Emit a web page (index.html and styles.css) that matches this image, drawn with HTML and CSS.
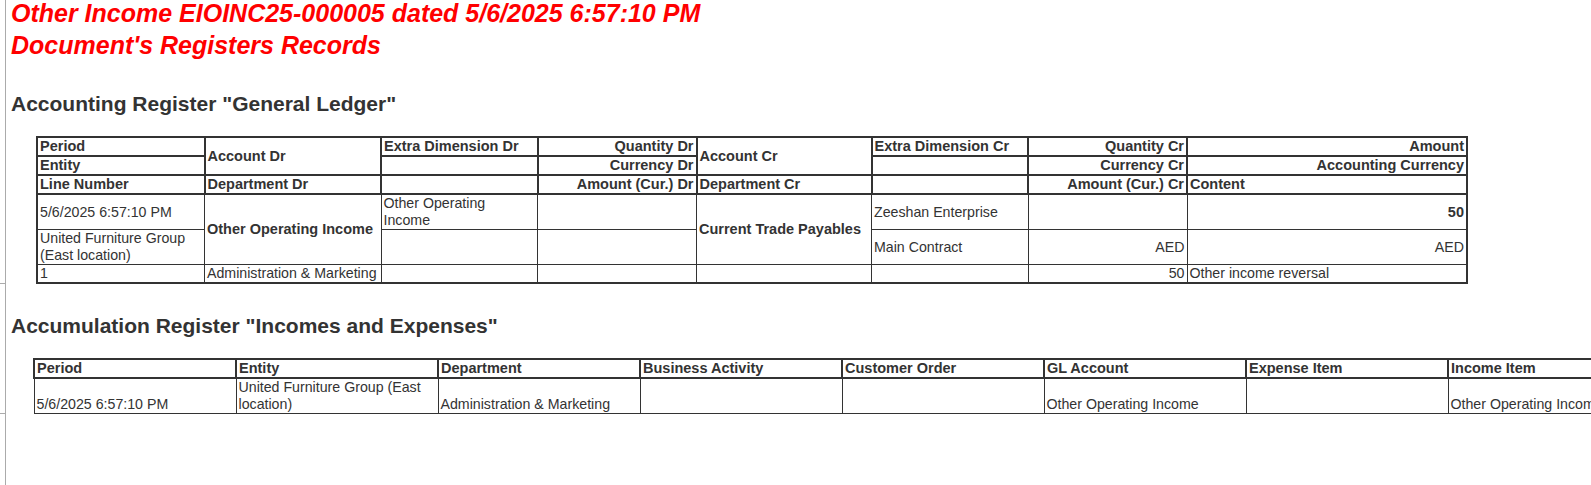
FILE: index.html
```html
<!DOCTYPE html>
<html lang="en">
<head>
<meta charset="utf-8">
<title>Document's Registers Records</title>
<link rel="stylesheet" href="styles.css">
</head>
<body>
<div class="page">
  <div class="titles">
    <div class="title">Other Income EIOINC25-000005 dated 5/6/2025 6:57:10 PM</div>
    <div class="title">Document's Registers Records</div>
  </div>

  <section class="register reg-gl">
    <h2 class="reg-name">Accounting Register "General Ledger"</h2>
    <div class="table-wrap">
      <table class="grid gl">
        <colgroup>
          <col class="g1"><col class="g2"><col class="g3"><col class="g4">
          <col class="g5"><col class="g6"><col class="g7"><col class="g8">
        </colgroup>
        <thead>
          <tr>
            <th>Period</th>
            <th rowspan="2">Account Dr</th>
            <th>Extra Dimension Dr</th>
            <th class="r">Quantity Dr</th>
            <th rowspan="2">Account Cr</th>
            <th>Extra Dimension Cr</th>
            <th class="r">Quantity Cr</th>
            <th class="r">Amount</th>
          </tr>
          <tr>
            <th>Entity</th>
            <th></th>
            <th class="r">Currency Dr</th>
            <th></th>
            <th class="r">Currency Cr</th>
            <th class="r">Accounting Currency</th>
          </tr>
          <tr>
            <th>Line Number</th>
            <th>Department Dr</th>
            <th></th>
            <th class="r">Amount (Cur.) Dr</th>
            <th>Department Cr</th>
            <th></th>
            <th class="r">Amount (Cur.) Cr</th>
            <th>Content</th>
          </tr>
        </thead>
        <tbody>
          <tr>
            <td>5/6/2025 6:57:10 PM</td>
            <td rowspan="2" class="b nw">Other Operating Income</td>
            <td>Other Operating Income</td>
            <td></td>
            <td rowspan="2" class="b nw">Current Trade Payables</td>
            <td>Zeeshan Enterprise</td>
            <td></td>
            <td class="r b">50</td>
          </tr>
          <tr>
            <td>United Furniture Group (East location)</td>
            <td></td>
            <td></td>
            <td>Main Contract</td>
            <td class="r">AED</td>
            <td class="r">AED</td>
          </tr>
          <tr>
            <td>1</td>
            <td class="nw">Administration &amp; Marketing</td>
            <td></td>
            <td></td>
            <td></td>
            <td></td>
            <td class="r">50</td>
            <td>Other income reversal</td>
          </tr>
        </tbody>
      </table>
    </div>
  </section>

  <section class="register reg-ie">
    <h2 class="reg-name">Accumulation Register "Incomes and Expenses"</h2>
    <div class="table-wrap">
      <table class="grid ie">
        <colgroup>
          <col class="a"><col class="a"><col class="a"><col class="a">
          <col class="a"><col class="a"><col class="a"><col class="a">
        </colgroup>
        <thead>
          <tr>
            <th>Period</th>
            <th>Entity</th>
            <th>Department</th>
            <th>Business Activity</th>
            <th>Customer Order</th>
            <th>GL Account</th>
            <th>Expense Item</th>
            <th>Income Item</th>
          </tr>
        </thead>
        <tbody>
          <tr>
            <td>5/6/2025 6:57:10 PM</td>
            <td>United Furniture Group (East location)</td>
            <td>Administration &amp; Marketing</td>
            <td></td>
            <td></td>
            <td>Other Operating Income</td>
            <td></td>
            <td class="nw">Other Operating Income</td>
          </tr>
        </tbody>
      </table>
    </div>
  </section>
</div>
</body>
</html>
```

FILE: styles.css
```css
html {
  overflow: hidden;
  background: #fff;
}

body {
  margin: 0;
  font-family: "Liberation Sans", Arial, sans-serif;
  color: #333;
}

.page {
  margin-left: 5px;
  border-left: 1px solid #ababab;
  min-height: 100vh;
  padding-left: 5px;
  box-sizing: border-box;
}

.titles {
  display: flex;
  flex-direction: column;
  gap: 6px;
}

.title {
  font-size: 25px;
  line-height: 26px;
  font-weight: bold;
  font-style: italic;
  color: #ff0000;
  white-space: nowrap;
}

.reg-name {
  margin: 0;
  font-size: 21px;
  line-height: 24px;
  font-weight: bold;
  color: #333;
  white-space: nowrap;
}

.reg-gl {
  margin-top: 34px;
}

.reg-ie {
  margin-top: 30px;
}

.table-wrap {
  position: relative;
  margin-top: 20px;
}

.table-wrap::after {
  content: "";
  position: absolute;
  left: -11px;
  bottom: 0;
  width: 5px;
  height: 1px;
  background: #ababab;
}

.grid {
  border-collapse: collapse;
  table-layout: fixed;
  font-size: 14.2px;
  line-height: 17px;
  color: #333;
}

.grid th,
.grid td {
  padding: 0 2px;
  text-align: left;
  vertical-align: middle;
  overflow: hidden;
}

.grid th {
  font-size: 14.5px;
  font-weight: bold;
  border: 2px solid #333;
  white-space: nowrap;
}

.grid td {
  font-weight: normal;
  border: 1px solid #333;
}

.grid .r {
  text-align: right;
}

.grid .b {
  font-size: 14.5px;
  font-weight: bold;
}

.grid .nw {
  white-space: nowrap;
}

/* General Ledger table */
.gl {
  width: 1430px;
  margin-left: 25px;
  border: 2px solid #333;
}

.gl .g1 { width: 167.5px; }
.gl .g2 { width: 176.5px; }
.gl .g3 { width: 156.5px; }
.gl .g4 { width: 159px; }
.gl .g5 { width: 175px; }
.gl .g6 { width: 156.5px; }
.gl .g7 { width: 159px; }
.gl .g8 { width: 280px; }

/* Incomes and Expenses table */
.ie {
  width: 1616px;
  margin-left: 22px;
}

.ie .a { width: 202px; }

.ie td {
  vertical-align: bottom;
}
```
